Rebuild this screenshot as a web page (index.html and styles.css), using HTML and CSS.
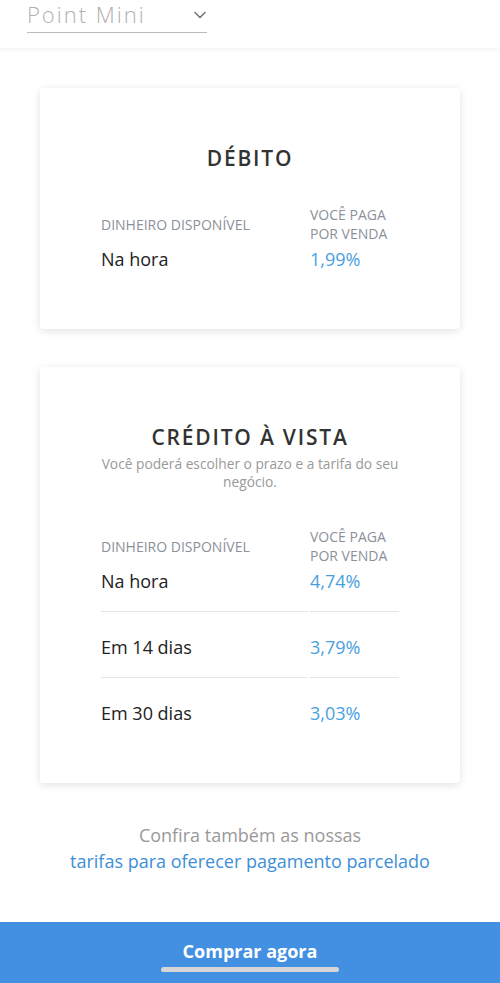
FILE: index.html
```html
<!DOCTYPE html>
<html lang="pt-BR">
<head>
    <meta charset="UTF-8">
    <meta name="viewport" content="width=device-width, initial-scale=1.0">
    <title>Tarifas Point Mini</title>
    <link rel="stylesheet" href="styles.css">
</head>
<body>
    <header class="top-bar">
        <div class="select">
            <span class="select-value">Point Mini</span>
            <svg class="select-arrow" width="14" height="10" viewBox="0 0 14 10">
                <path d="M2 2.5 L7 7.5 L12 2.5" fill="none" stroke="#777" stroke-width="1.6" stroke-linecap="round" stroke-linejoin="round"/>
            </svg>
        </div>
    </header>

    <main class="content">
        <section class="card">
            <h2 class="card-title">DÉBITO</h2>
            <div class="rates">
                <div class="rates-head">DINHEIRO DISPONÍVEL</div>
                <div class="rates-head">VOCÊ PAGA<br>POR VENDA</div>
                <div class="rates-cell rates-first rates-last">Na hora</div>
                <div class="rates-cell rates-value rates-first rates-last">1,99%</div>
            </div>
        </section>

        <section class="card">
            <h2 class="card-title">CRÉDITO À VISTA</h2>
            <p class="card-note">Você poderá escolher o prazo e a tarifa do seu negócio.</p>
            <div class="rates rates-after-note">
                <div class="rates-head">DINHEIRO DISPONÍVEL</div>
                <div class="rates-head">VOCÊ PAGA<br>POR VENDA</div>
                <div class="rates-cell rates-first">Na hora</div>
                <div class="rates-cell rates-value rates-first">4,74%</div>
                <div class="rates-cell">Em 14 dias</div>
                <div class="rates-cell rates-value">3,79%</div>
                <div class="rates-cell rates-last">Em 30 dias</div>
                <div class="rates-cell rates-value rates-last">3,03%</div>
            </div>
        </section>

        <p class="more">
            Confira também as nossas<br>
            <a href="#" class="more-link">tarifas para oferecer pagamento parcelado</a>
        </p>
    </main>

    <footer class="buy-bar">
        <button class="buy-button" type="button">Comprar agora</button>
        <div class="home-indicator"></div>
    </footer>
</body>
</html>
```

FILE: styles.css
```css
body {
    font-family: "Open Sans", Arial, sans-serif;
    background-color: #fff;
    margin: 0;
    color: #222;
}

.top-bar {
    height: 48px;
    background: #fff;
    box-shadow: 0 2px 4px rgba(0, 0, 0, 0.05);
    position: relative;
}

.select {
    position: absolute;
    left: 27px;
    top: 0;
    width: 180px;
    height: 33px;
    border-bottom: 1.5px solid #bcbcbc;
    display: flex;
    align-items: center;
    justify-content: space-between;
    box-sizing: border-box;
}

.select-value {
    font-size: 22px;
    font-weight: 300;
    letter-spacing: 2px;
    color: #b0b0b0;
    margin-top: -4px;
}

.select-arrow {
    margin-top: -2px;
}

.content {
    padding: 40px 40px 0;
}

.card {
    background: #fff;
    border-radius: 4px;
    box-shadow: 0 2px 8px rgba(0, 0, 0, 0.12);
    padding: 58px 61px 40px;
    margin-bottom: 38px;
}

.card-title {
    margin: 0;
    text-align: center;
    font-size: 21px;
    line-height: 24px;
    font-weight: 600;
    letter-spacing: 1.8px;
    color: #333;
}

.card-note {
    margin: 6px auto 0;
    max-width: 310px;
    text-align: center;
    font-size: 13.75px;
    line-height: 18px;
    color: #999;
}

.rates {
    display: grid;
    grid-template-columns: 207px 89px;
    column-gap: 2px;
    margin-top: 35px;
}

.rates-after-note {
    margin-top: 36px;
}

.rates-head {
    display: flex;
    align-items: center;
    font-size: 14px;
    line-height: 19px;
    color: #8b909b;
}

.rates-cell {
    font-size: 18px;
    line-height: 22px;
    padding: 24px 0 19px;
    border-bottom: 1.5px solid #e6e6e6;
}

.rates-first {
    padding-top: 5px;
}

.rates-last {
    border-bottom: none;
}

.rates-value {
    color: #4a9fe0;
}

.more {
    margin: 39px 0 0;
    text-align: center;
    font-size: 18px;
    line-height: 26px;
    color: #999;
}

.more-link {
    color: #3d8fd8;
    text-decoration: none;
}

.buy-bar {
    margin-top: 48px;
    height: 61px;
    background: #4390e2;
    display: flex;
    flex-direction: column;
    align-items: center;
}

.buy-button {
    margin-top: 18px;
    border: none;
    background: none;
    color: #fff;
    font-family: inherit;
    font-size: 18px;
    font-weight: 700;
    padding: 0;
    line-height: 22px;
}

.home-indicator {
    margin-top: 5px;
    width: 178px;
    height: 5px;
    border-radius: 3px;
    background: #d6d6d6;
}
```
